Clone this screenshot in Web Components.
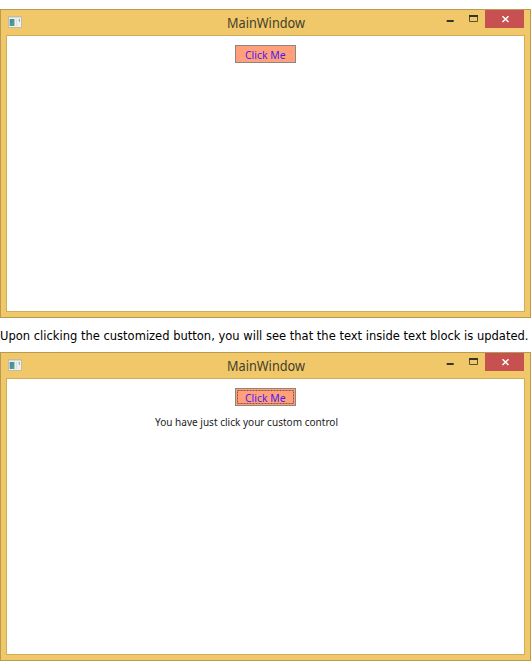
<!DOCTYPE html>
<html lang="en">
<head>
<meta charset="utf-8">
<title>MainWindow</title>
<style>
html,body{margin:0;background:#fff}
body{width:531px;height:661px;overflow:hidden}
</style>
</head>
<body>
<doc-page></doc-page>
<script>
class Base extends HTMLElement{
  constructor(){
    super();
    this.attachShadow({mode:'open'}).innerHTML=this.view();
  }
}
// One line of text set to a given width; inherits font and colour.
customElements.define('fit-text',class extends HTMLElement{
  connectedCallback(){
    if(this.shadowRoot)return;
    const w=this.getAttribute('width'),h=this.getAttribute('height'),b=this.getAttribute('baseline');
    this.attachShadow({mode:'open'}).innerHTML=`<style>:host{display:block;width:${w}px;height:${h}px}svg{display:block;overflow:visible}</style>
    <svg width="${w}" height="${h}"><text x="0" y="${b}" textLength="${w}" lengthAdjust="spacingAndGlyphs" fill="currentColor"></text></svg>`;
    this.shadowRoot.querySelector('text').textContent=this.getAttribute('text');
  }
});
customElements.define('app-icon',class extends Base{
  view(){return `<style>:host{display:block;width:14px;height:12px}svg{display:block}</style>
  <svg width="14" height="12" viewBox="0 0 14 12">
    <defs><linearGradient id="g" x2="1" y2="1"><stop stop-color="#4b7fb0"/><stop offset="1" stop-color="#55a878"/></linearGradient></defs>
    <rect x=".5" y=".5" width="13" height="11" fill="#eef0ec" stroke="#c2bca4"/>
    <rect x="1" y="1" width="12" height="1" fill="#d3d8d6"/>
    <rect x="1" y="3" width="1" height="7" fill="#b9cdd0"/>
    <rect x="2" y="3" width="4" height="7" fill="url(#g)"/>
    <rect x="6" y="3" width="1" height="7" fill="#a5cbb8"/>
    <rect x="8" y="3" width="1" height="7" fill="#dddde4"/>
    <rect x="11" y="3" width="1" height="3" fill="#8fbcb0"/>
    <rect x="10" y="3" width="1" height="2" fill="#cfdde2"/>
  </svg>`}
});
customElements.define('window-controls',class extends Base{
  view(){return `<style>
  :host{display:flex;height:18px}
  svg{display:block}
  .close{background:#c75050}
  </style>
  <svg width="24" height="18"><rect x="7.7" y="10" width="7" height="2" fill="#37342a"/></svg>
  <svg width="22" height="18"><path d="M6.5 5.5h8v6h-8z" fill="none" stroke="#5a5030"/><path d="M6 5h9v2H6z" fill="#37342a"/></svg>
  <svg class="close" width="39" height="18"><path d="M17.5 6.2l6 5.8M23.5 6.2l-6 5.8" stroke="#fff" stroke-width="1.5" fill="none"/></svg>`}
});
customElements.define('click-button',class extends Base{
  view(){return `<style>
  :host{display:block;width:61px;height:18px}
  button{all:unset;box-sizing:border-box;display:grid;grid-template:1fr/1fr;place-items:center;width:61px;height:18px;
    border:1px solid #8a8682;background:#ffa07a;color:#4a1af0;font:11.3px/14px "Noto Sans",sans-serif}
  .ring{grid-area:1/1;display:none}
  fit-text{grid-area:1/1;margin-right:1px}
  :host([focused]) .ring{display:block}
  </style><button><svg class="ring" width="57" height="14"><rect x=".5" y=".5" width="56" height="13" fill="none" stroke="#8a5138" stroke-dasharray="2 1"/></svg>
  <fit-text width="40.5" height="16" baseline="12.6" text="Click Me"></fit-text></button>`}
});
customElements.define('main-window',class extends Base{
  view(){return `<style>
  :host{display:flex;flex-direction:column;box-sizing:border-box;width:531px;height:309px;border:1px solid #b89b51;background:#f0c869;padding:0 5px 5px}
  header{display:grid;grid-template-columns:140px 1fr 140px;height:25px}
  app-icon{margin:6px 0 0 2px}
  h1{margin:0;display:flex;justify-content:center;font:400 13.5px/26px "Noto Sans",sans-serif;color:#443e2c}
  window-controls{justify-self:end;margin-right:1px}
  main{flex:1;box-sizing:border-box;border:1px solid #cfad5b;background:#fff;display:flex;flex-direction:column;align-items:center;padding-top:9px}
  </style>
  <header><app-icon></app-icon><h1><fit-text width="78" height="25" baseline="18" text="MainWindow"></fit-text></h1><window-controls></window-controls></header>
  <main><slot></slot></main>`}
});
customElements.define('text-block',class extends Base{
  view(){return `<style>:host{display:block;margin:9px 0 0 -38px;font:11px/15px "Noto Sans",sans-serif;color:#222}
  </style><fit-text width="183" height="15" baseline="11" text="You have just click your custom control"></fit-text>`}
});
customElements.define('doc-page',class extends Base{
  view(){return `<style>
  :host{display:flex;flex-direction:column;width:531px;height:661px;box-sizing:border-box;padding-top:9px}
  p{margin:0;height:34px;font:11.5px/34px Verdana,"DejaVu Sans",sans-serif;color:#000}
  </style>
  <main-window><click-button></click-button></main-window>
  <p><fit-text width="528.5" height="34" baseline="22" text="Upon clicking the customized button, you will see that the text inside text block is updated."></fit-text></p>
  <main-window><click-button focused></click-button><text-block></text-block></main-window>`}
});
</script>
</body>
</html>
